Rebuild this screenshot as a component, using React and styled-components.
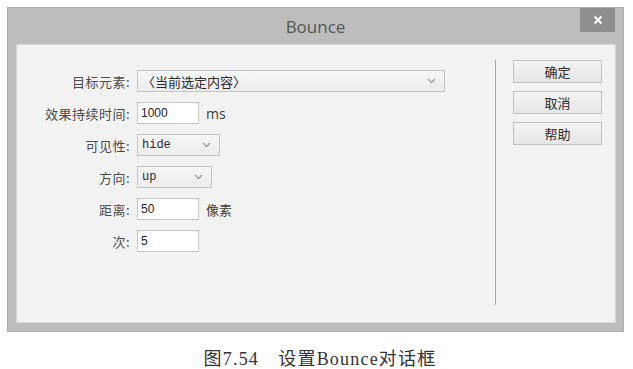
import React from "react";
import styled, { createGlobalStyle } from "styled-components";

const GlobalStyle = createGlobalStyle`
  body {
    margin: 0;
    background: #ffffff;
    font-family: "Noto Sans CJK SC", "Noto Sans", sans-serif;
  }
`;

const Page = styled.div`
  width: 633px;
  height: 369px;
  padding: 7px 0 0 7px;
  box-sizing: border-box;
`;

const Dialog = styled.div`
  width: 617px;
  height: 325px;
  background: #bdbdbd;
  border: 1px solid #adadad;
  box-sizing: border-box;
  display: flex;
  flex-direction: column;
`;

const TitleBar = styled.div`
  height: 36px;
  display: flex;
  align-items: center;
  justify-content: center;
  position: relative;
  font-family: "Open Sans", "Noto Sans", sans-serif;
  font-size: 17px;
  color: #555;
`;

const CloseButton = styled.div`
  position: absolute;
  right: 8px;
  top: 0;
  width: 35px;
  height: 24px;
  background: #8e8e8e;
  display: flex;
  align-items: center;
  justify-content: center;
`;

const Body = styled.div`
  flex: 1;
  margin: 0 7px 8px 8px;
  background: #f3f3f3;
  border: 1px solid #d6d6d6;
  display: flex;
`;

const Form = styled.div`
  width: 470px;
  padding-top: 25px;
  display: flex;
  flex-direction: column;
  gap: 10px;
`;

const Row = styled.div`
  display: grid;
  grid-template-columns: 113px auto auto;
  column-gap: 7px;
  align-items: center;
  height: 22px;
  justify-content: start;
`;

const Label = styled.div`
  text-align: right;
  font-size: 13px;
  color: #4a4a4a;
  letter-spacing: 0.5px;
`;

const Select = styled.div`
  width: ${(p) => p.$w}px;
  height: 22px;
  box-sizing: border-box;
  border: 1px solid #c4c4c4;
  background: linear-gradient(#f7f7f7, #ececec);
  display: flex;
  align-items: center;
  justify-content: space-between;
  padding: 0 8px 0 4px;
  font-family: ${(p) => (p.$mono ? `"Liberation Mono", monospace` : `"Noto Sans CJK SC", sans-serif`)};
  font-size: ${(p) => (p.$mono ? 12 : 13)}px;
  color: #2a2a2a;
`;

const Input = styled.div`
  width: 62px;
  height: 22px;
  box-sizing: border-box;
  border: 1px solid #c8c8c8;
  background: #ffffff;
  display: flex;
  align-items: center;
  padding-left: 3px;
  font-family: "Liberation Sans", "Noto Sans", sans-serif;
  font-size: 12px;
  color: #222;
`;

const Unit = styled.span`
  font-size: ${(p) => (p.$cjk ? 13 : 14)}px;
  font-family: ${(p) => (p.$cjk ? `"Noto Sans CJK SC", sans-serif` : `"Open Sans", sans-serif`)};
  color: #3a3a3a;
`;

const Divider = styled.div`
  width: 1px;
  background: #a6a6a6;
  margin: 15px 0 17px 8px;
`;

const Buttons = styled.div`
  padding: 15px 0 0 17px;
  display: flex;
  flex-direction: column;
  gap: 8px;
`;

const Button = styled.div`
  width: 89px;
  height: 23px;
  box-sizing: border-box;
  border: 1px solid #c2c2c2;
  background: linear-gradient(#f4f4f4, #e6e6e6);
  display: flex;
  align-items: center;
  justify-content: center;
  font-size: 13px;
  color: #2a2a2a;
`;

const Caption = styled.div`
  margin-top: 12px;
  text-align: center;
  font-family: "Liberation Serif", "Noto Sans CJK SC", serif;
  font-size: 18px;
  color: #333;
  letter-spacing: 1.2px;
`;

const Chevron = () => (
  <svg width="9" height="6" viewBox="0 0 9 6">
    <polyline points="1,1 4.5,4.5 8,1" fill="none" stroke="#9a9a9a" strokeWidth="1.3" />
  </svg>
);

export default function App() {
  return (
    <Page>
      <GlobalStyle />
      <Dialog>
        <TitleBar>
          Bounce
          <CloseButton>
            <svg width="10" height="10" viewBox="0 0 10 10">
              <path d="M1.5 1.5 L8.5 8.5 M8.5 1.5 L1.5 8.5" stroke="#fff" strokeWidth="2" />
            </svg>
          </CloseButton>
        </TitleBar>
        <Body>
          <Form>
            <Row>
              <Label>目标元素:</Label>
              <Select $w={308}>
                〈当前选定内容〉
                <Chevron />
              </Select>
            </Row>
            <Row>
              <Label>效果持续时间:</Label>
              <Input>1000</Input>
              <Unit>ms</Unit>
            </Row>
            <Row>
              <Label>可见性:</Label>
              <Select $w={83} $mono>
                hide
                <Chevron />
              </Select>
            </Row>
            <Row>
              <Label>方向:</Label>
              <Select $w={75} $mono>
                up
                <Chevron />
              </Select>
            </Row>
            <Row>
              <Label>距离:</Label>
              <Input>50</Input>
              <Unit $cjk>像素</Unit>
            </Row>
            <Row>
              <Label>次:</Label>
              <Input>5</Input>
            </Row>
          </Form>
          <Divider />
          <Buttons>
            <Button>确定</Button>
            <Button>取消</Button>
            <Button>帮助</Button>
          </Buttons>
        </Body>
      </Dialog>
      <Caption>图7.54　设置Bounce对话框</Caption>
    </Page>
  );
}
